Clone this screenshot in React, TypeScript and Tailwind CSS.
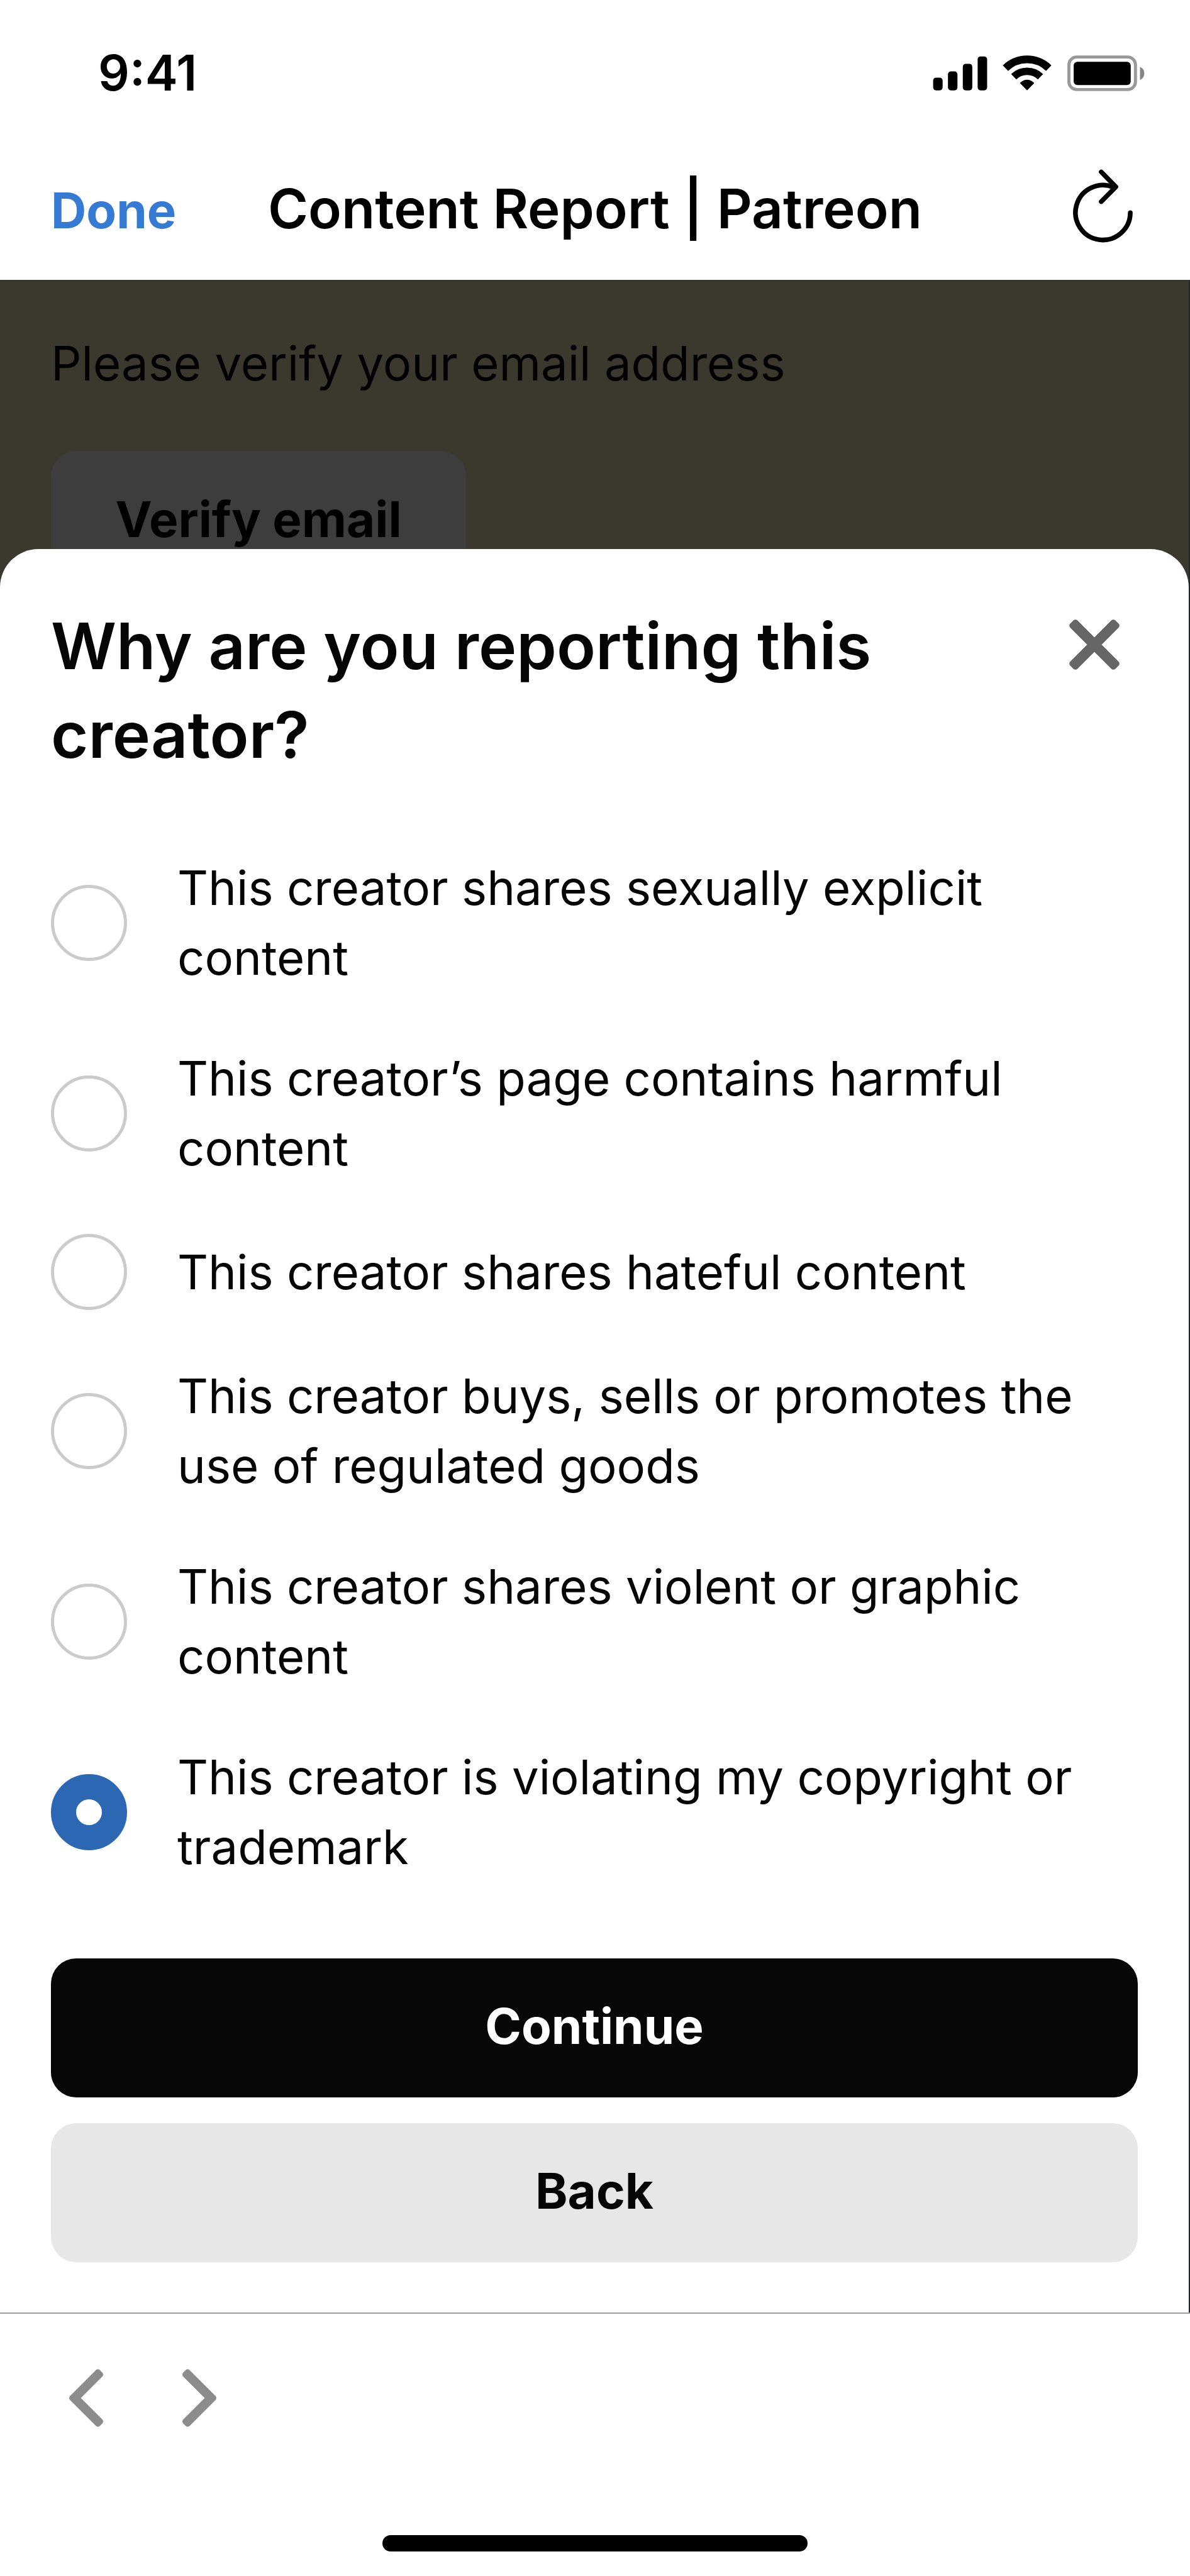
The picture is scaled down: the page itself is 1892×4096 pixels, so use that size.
import { useState } from 'react';

const REASONS = [
  { id: 'explicit', label: 'This creator shares sexually explicit content' },
  { id: 'harmful', label: 'This creator’s page contains harmful content' },
  { id: 'hateful', label: 'This creator shares hateful content' },
  { id: 'regulated', label: 'This creator buys, sells or promotes the use of regulated goods' },
  { id: 'violent', label: 'This creator shares violent or graphic content' },
  { id: 'copyright', label: 'This creator is violating my copyright or trademark' },
];

function StatusIcons() {
  return (
    <svg className="w-[337px] h-[57px]" viewBox="137 87 1025 174" fill="none" aria-hidden="true">
      {/* Signal */}
      <rect x="137" y="195" width="46" height="62" rx="14" fill="#000" />
      <rect x="209" y="165" width="46" height="92" rx="14" fill="#000" />
      <rect x="281" y="128" width="46" height="129" rx="14" fill="#000" />
      <rect x="353" y="92" width="46" height="165" rx="14" fill="#000" />
      {/* Wifi */}
      <path d="M488 149A151 151 0 0 1 698 149" stroke="#000" strokeWidth="37" />
      <path d="M528 191A93 93 0 0 1 658 191" stroke="#000" strokeWidth="36" />
      <path d="M593 257L558 221Q593 189 628 221Z" fill="#000" />
      {/* Battery */}
      <rect x="796" y="95" width="323" height="158" rx="38" stroke="#999" strokeWidth="15" />
      <rect x="819" y="118" width="277" height="113" rx="18" fill="#000" />
      <path d="M1141 143Q1162 153 1162 175T1141 207Z" fill="#858585" />
    </svg>
  );
}

function RefreshIcon() {
  return (
    <svg
      className="w-[95px] h-[117px]"
      viewBox="93 68 290 356"
      fill="none"
      stroke="#000"
      strokeWidth="23"
      strokeLinecap="round"
      strokeLinejoin="round"
    >
      <path d="M371 279A133 133 0 1 1 291 156" />
      <path d="M230 81L301 153L230 225" />
    </svg>
  );
}

function CloseIcon() {
  return (
    <svg className="size-[80px]" viewBox="-122 -122 244 244" fill="#666">
      <rect x="-155" y="-25" width="310" height="50" rx="14" transform="rotate(45)" />
      <rect x="-155" y="-25" width="310" height="50" rx="14" transform="rotate(-45)" />
    </svg>
  );
}

function Chevron({ flip = false }: { flip?: boolean }) {
  return (
    <svg
      className={flip ? 'w-[54px] h-[92px] -scale-x-100' : 'w-[54px] h-[92px]'}
      viewBox="0 0 165 279"
      fill="#8c8c8c"
      stroke="#8c8c8c"
      strokeWidth="28"
      strokeLinejoin="round"
    >
      <path d="M14 139.5L139.5 14L151 25.5L37 139.5L151 253.5L139.5 265Z" />
    </svg>
  );
}

export default function App() {
  const [reason, setReason] = useState('copyright');

  return (
    <div className="bg-white text-[#050505] font-['Inter',sans-serif]">
      {/* Status bar */}
      <div className="h-[232px] pl-[156px] pr-[72px] flex items-center justify-between text-black">
        <span className="text-[78px] leading-[90px] font-semibold">9:41</span>
        <StatusIcons />
      </div>

      {/* Browser header */}
      <header className="h-[213px] px-[81px] pt-[37px] grid grid-cols-[1fr_auto_1fr] items-baseline text-black">
        <button type="button" className="justify-self-start text-[78px] leading-[90px] font-bold text-[#357bd4]">
          Done
        </button>
        <h1 className="text-[87px] leading-[126px] font-semibold">Content Report | Patreon</h1>
        <button type="button" aria-label="Reload" className="self-start justify-self-end mr-[10px]">
          <RefreshIcon />
        </button>
      </header>

      <main className="bg-[#22272d] pr-[2px]">
        {/* Dimmed page */}
        <section className="bg-[#3b382e] px-[81px] pt-[76px] pb-[43px] text-black">
          <p className="text-[76px] leading-[112px]">Please verify your email address</p>
          <button
            type="button"
            className="mt-[84px] w-[660px] h-[221px] pb-[4px] rounded-[40px] bg-[#3d3d3d] text-[78px] leading-[90px] font-bold"
          >
            Verify email
          </button>
        </section>

        {/* Sheet */}
        <form
          className="relative -mt-[108px] px-[81px] pt-[84px] pb-[80px] rounded-t-[61px] bg-white"
          onSubmit={(e) => e.preventDefault()}
        >
          <div className="flex items-start justify-between">
            <h2 className="flex-1 pr-[160px] text-[102px] leading-[141px] font-semibold">
              Why are you reporting this creator?
            </h2>
            <button type="button" aria-label="Close" className="mt-[28px] mr-[29px]">
              <CloseIcon />
            </button>
          </div>

          <div className="mt-[117px] flex flex-col gap-[81px]">
            {REASONS.map((r) => (
              <label key={r.id} className="flex items-center gap-[80px] text-[76px] leading-[111px]">
                <input
                  type="radio"
                  name="reason"
                  value={r.id}
                  checked={reason === r.id}
                  onChange={() => setReason(r.id)}
                  className="size-[121px] shrink-0 appearance-none rounded-full border-[5px] border-[#cbcbcb] bg-white checked:border-[40px] checked:border-[#2c67b3]"
                />
                <span>{r.label}</span>
              </label>
            ))}
          </div>

          <div className="mt-[122px] flex flex-col gap-[41px] text-[78px] leading-[90px] font-bold">
            <button type="submit" className="h-[221px] pb-[6px] rounded-[40px] bg-[#070707] text-white">
              Continue
            </button>
            <button type="button" className="h-[221px] pb-[6px] rounded-[40px] bg-[#e7e7e7]">
              Back
            </button>
          </div>
        </form>
      </main>

      {/* Browser toolbar */}
      <footer className="border-t-2 border-[#9c9c9c] pt-[88px] pb-[39px]">
        <nav className="px-[110px] flex gap-[126px]">
          <button type="button" aria-label="Back one page">
            <Chevron />
          </button>
          <button type="button" aria-label="Forward one page">
            <Chevron flip />
          </button>
        </nav>
        <div className="mt-[172px] mx-auto w-[676px] h-[26px] rounded-full bg-black" />
      </footer>
    </div>
  );
}
